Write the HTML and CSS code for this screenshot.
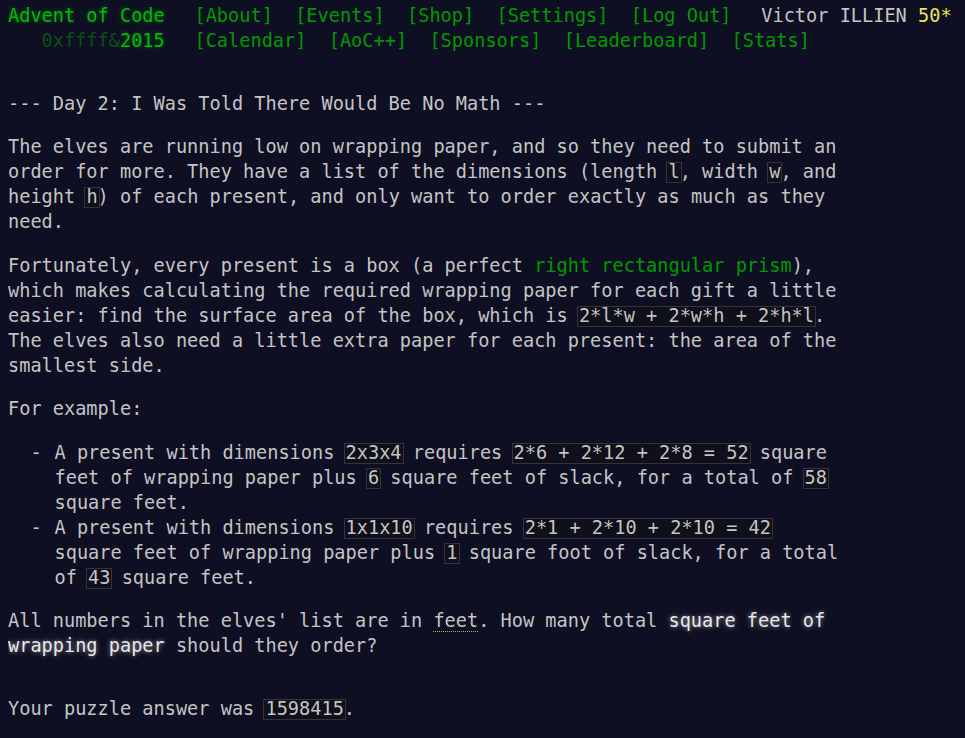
FILE: index.html
```html
<!DOCTYPE html>
<html>
<head>
<meta charset="utf-8">
<title>Day 2 - Advent of Code 2015</title>
<link rel="stylesheet" href="styles.css">
</head>
<body>
<header class="site-header">
  <div class="header-row">
    <h1 class="title title-global"><a href="#">Advent of Code</a></h1>
    <ul class="nav">
      <li><a href="#">[About]</a></li><li><a href="#">[Events]</a></li><li><a href="#">[Shop]</a></li><li><a href="#">[Settings]</a></li><li><a href="#">[Log Out]</a></li>
    </ul>
    <div class="user">Victor ILLIEN <span class="star-count">50*</span></div>
  </div>
  <div class="header-row">
    <h1 class="title title-event"><span class="title-event-wrap">   0xffff&amp;</span><a href="#">2015</a></h1>
    <ul class="nav">
      <li><a href="#">[Calendar]</a></li><li><a href="#">[AoC++]</a></li><li><a href="#">[Sponsors]</a></li><li><a href="#">[Leaderboard]</a></li><li><a href="#">[Stats]</a></li>
    </ul>
  </div>
</header>
<main>
  <article class="day-desc">
    <h2>--- Day 2: I Was Told There Would Be No Math ---</h2>
    <p>The elves are running low on wrapping paper, and so they need to submit an order for more. They have a list of the dimensions (length <code>l</code>, width <code>w</code>, and height <code>h</code>) of each present, and only want to order exactly as much as they need.</p>
    <p>Fortunately, every present is a box (a perfect <a href="#">right rectangular prism</a>), which makes calculating the required wrapping paper for each gift a little easier: find the surface area of the box, which is <code>2*l*w + 2*w*h + 2*h*l</code>. The elves also need a little extra paper for each present: the area of the smallest side.</p>
    <p>For example:</p>
    <ul class="examples">
      <li>A present with dimensions <code>2x3x4</code> requires <code>2*6 + 2*12 + 2*8 = 52</code> square feet of wrapping paper plus <code>6</code> square feet of slack, for a total of <code>58</code> square feet.</li>
      <li>A present with dimensions <code>1x1x10</code> requires <code>2*1 + 2*10 + 2*10 = 42</code> square feet of wrapping paper plus <code>1</code> square foot of slack, for a total of <code>43</code> square feet.</li>
    </ul>
    <p>All numbers in the elves' list are in <span class="hint" title="Yes, I know that's not a real unit.">feet</span>. How many total <em>square feet of wrapping paper</em> should they order?</p>
  </article>
  <p class="answer">Your puzzle answer was <code>1598415</code>.</p>
</main>
</body>
</html>
```
FILE: styles.css
```css
html, body {
  background: #0f0f23;
}
body {
  margin: 0 8px;
  color: #c4c4c4;
  font-family: "DejaVu Sans Mono", "Liberation Mono", monospace;
  font-size: 18.6px;
  line-height: 25px;
}
a {
  color: #009900;
  text-decoration: none;
}
.site-header {
  margin-top: 3px;
  margin-bottom: 37.5px;
  white-space: nowrap;
  color: #009900;
}
.header-row {
  display: flex;
  align-items: baseline;
}
.title {
  margin: 0;
  width: 14ch;
  padding-right: 1em;
  font-size: 1em;
  font-weight: normal;
  white-space: pre;
}
.title a {
  color: #00bb00;
  text-shadow: 0 0 4px rgba(0, 204, 0, 0.45);
}
.title-event-wrap {
  color: #00cc00;
  opacity: 0.33;
}
.nav {
  list-style: none;
  margin: 0;
  padding: 0;
  display: flex;
}
.nav li {
  padding: 0 0.6em;
}
.user {
  padding-left: 1em;
  color: #c4c4c4;
}
.star-count {
  color: #e6e65c;
}
.day-desc {
  width: 841px;
}
.day-desc h2 {
  margin: 0 0 1em;
  font-size: 1em;
  font-weight: normal;
  color: #c4c4c4;
  white-space: nowrap;
}
p {
  margin: 1em 0;
}
.examples {
  list-style: none;
  margin: 1em 0;
  padding: 0;
}
.examples li {
  position: relative;
  padding-left: 2.5em;
}
.examples li::before {
  content: "\00a0\00a0-\00a0";
  position: absolute;
  left: 0;
}
code {
  position: relative;
  display: inline-block;
  isolation: isolate;
  font-family: inherit;
  font-size: 1em;
  margin: 0;
  padding: 0;
}
code::before {
  content: "";
  position: absolute;
  z-index: -1;
  left: -2px;
  right: -2px;
  top: 3px;
  bottom: 1px;
  border: 1px solid #333340;
  background: #10101a;
}
em {
  font-style: normal;
  color: #e8e8e8;
  text-shadow: 0 0 5px rgba(255, 255, 255, 0.55);
}
.hint {
  border-bottom: 1px dotted #b0b050;
}
.answer {
  margin-top: 37.5px;
}
```
